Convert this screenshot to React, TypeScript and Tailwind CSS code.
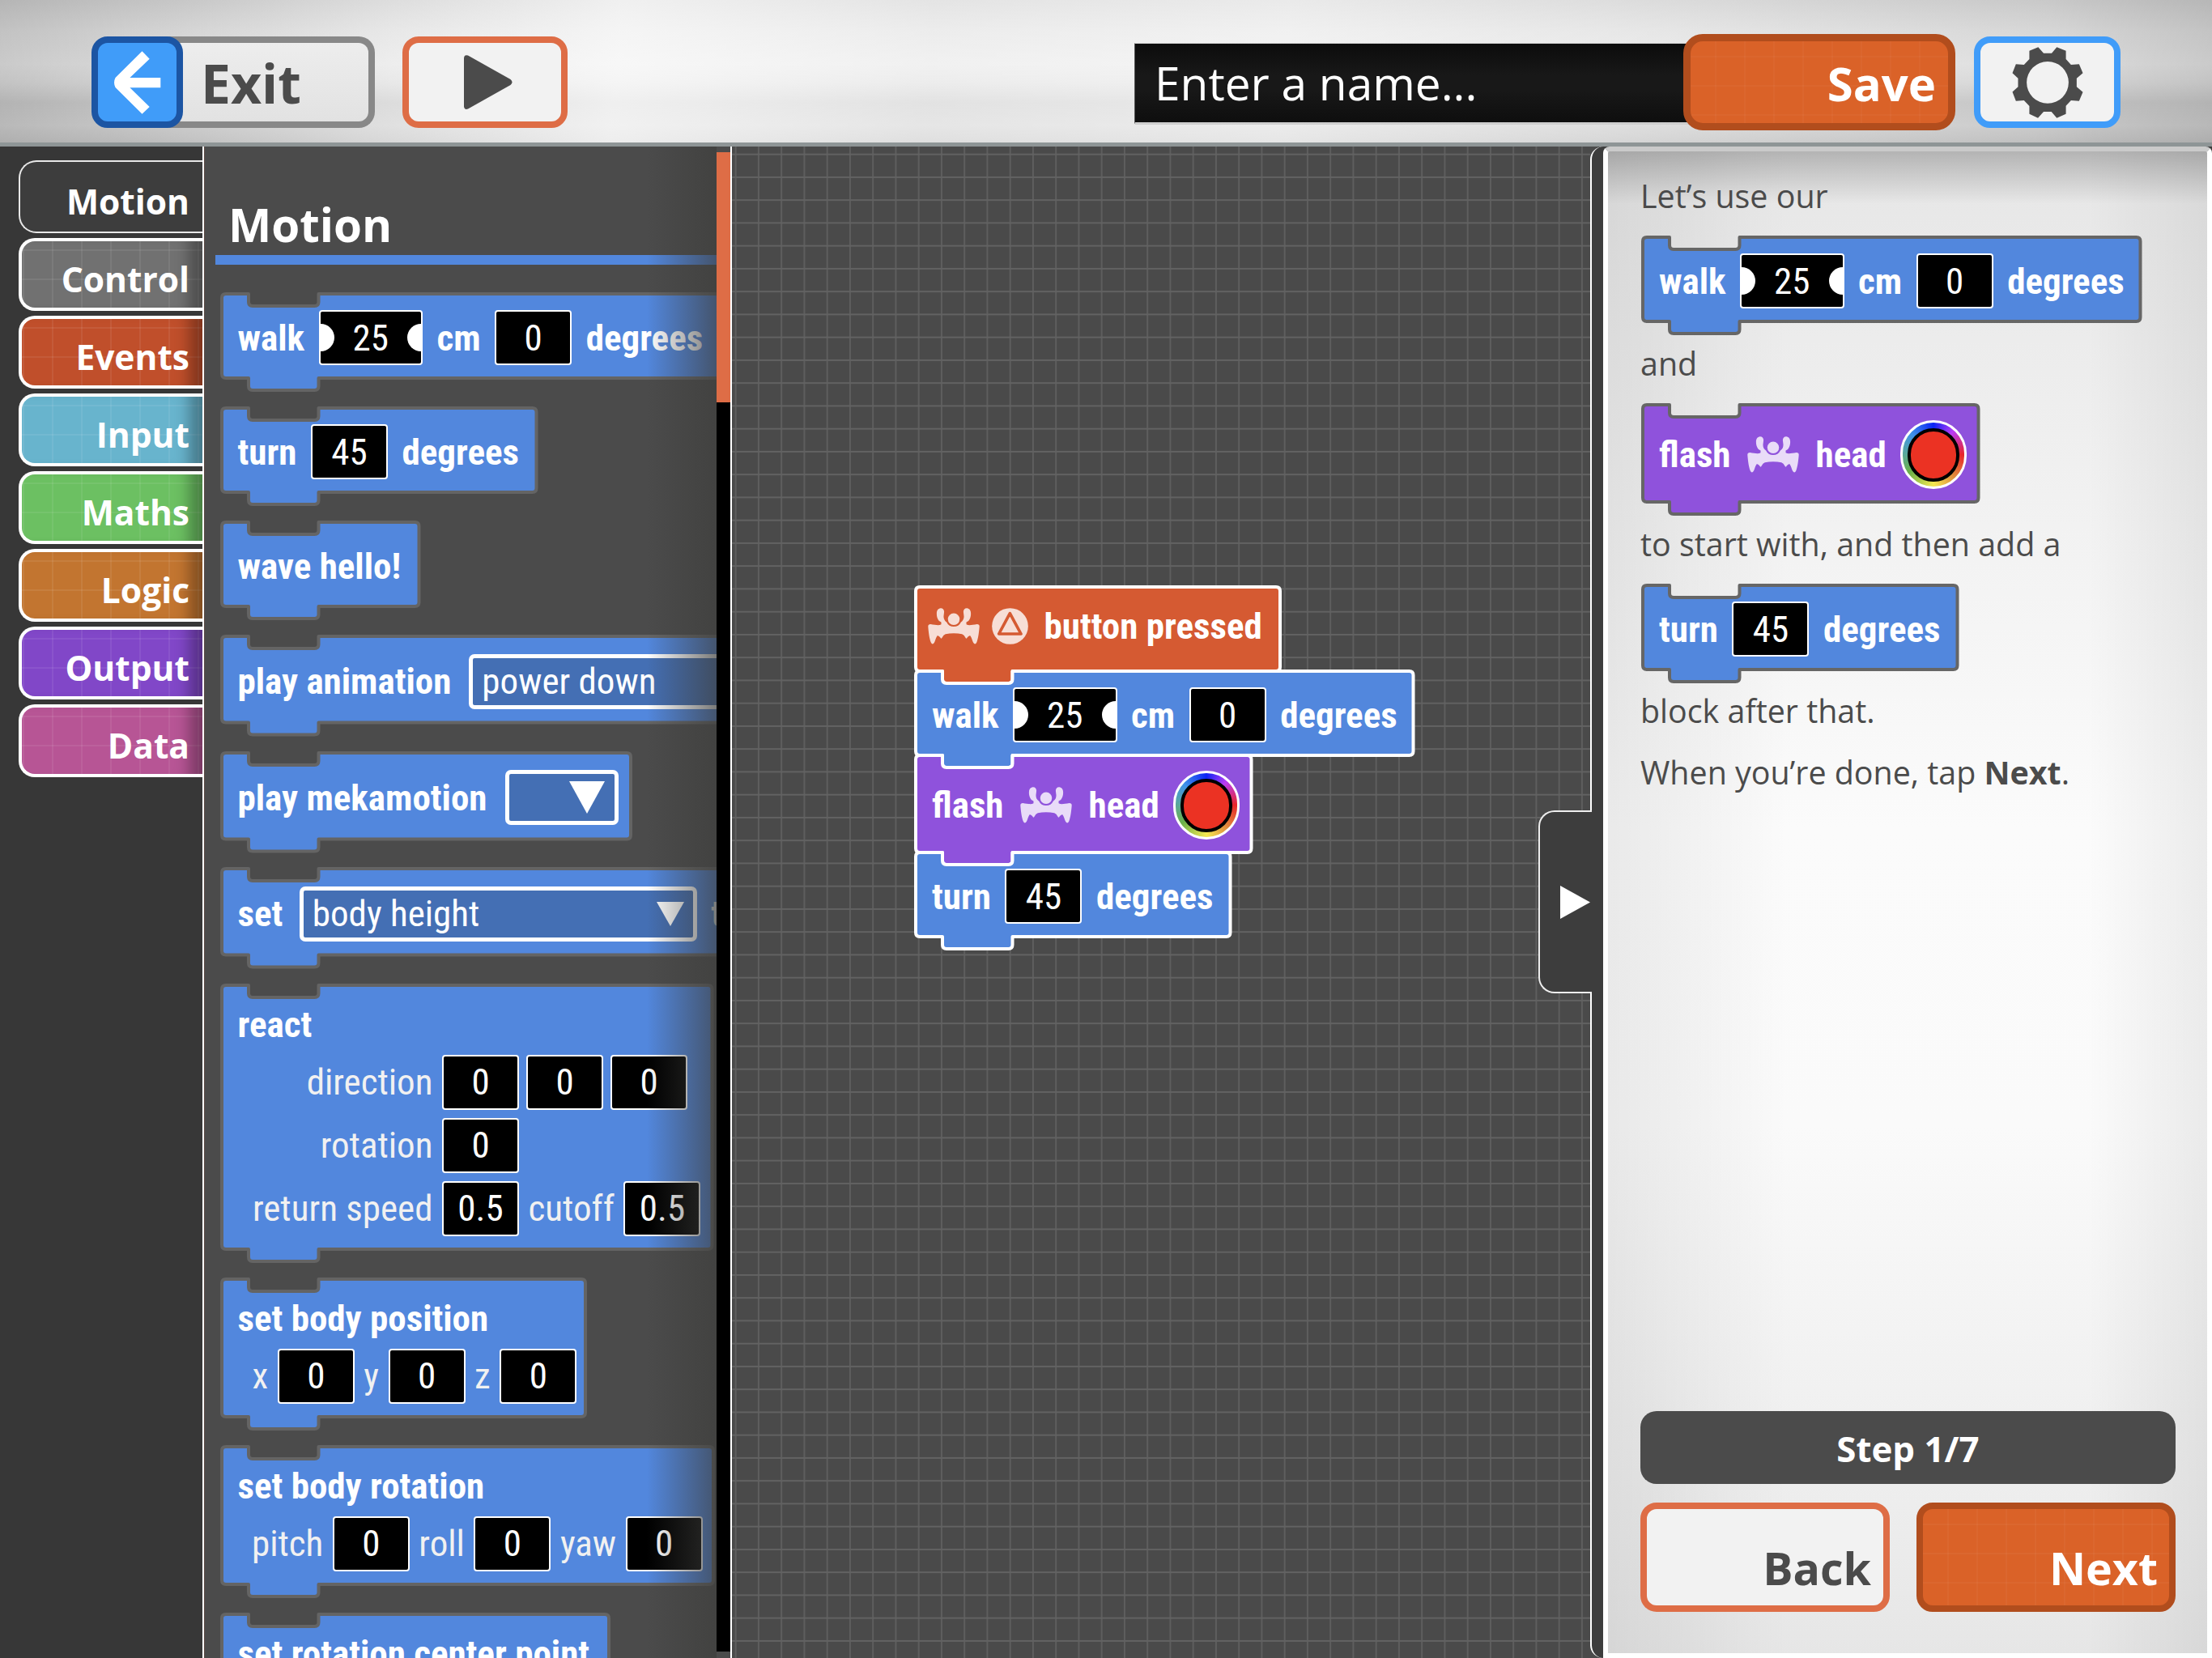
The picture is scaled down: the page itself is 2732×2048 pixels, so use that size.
import React from "react";
import clsx from "clsx";

const tabs = [
  { label: "Control", color: "bg-[#717171]" },
  { label: "Events", color: "bg-[#c04f2b]" },
  { label: "Input", color: "bg-[#68b4cd]" },
  { label: "Maths", color: "bg-[#6cc062]" },
  { label: "Logic", color: "bg-[#c27530]" },
  { label: "Output", color: "bg-[#8147c8]" },
  { label: "Data", color: "bg-[#b75595]" },
];

const buttonGrid =
  "bg-[linear-gradient(#ffffff08_2px,transparent_2px),linear-gradient(90deg,#ffffff08_2px,transparent_2px)] bg-size-[36px_36px] bg-position-[30px_18px]";

type BlockProps = {
  w: number;
  h: number;
  fill?: string;
  stroke?: string;
  hat?: boolean;
  className?: string;
  children: React.ReactNode;
};

function Block({
  w,
  h,
  fill = "#5287dd",
  stroke = "#646464",
  hat,
  className,
  children,
}: BlockProps) {
  const notch = hat ? "" : "H33 V10 q0 5 5 5 H114.5 q5 0 5 -5 V0";
  const d = `M0 5 q0 -5 5 -5 ${notch} H${w - 5} q5 0 5 5 V${h - 5} q0 5 -5 5 H119.5 V${h + 10} q0 5 -5 5 H38 q-5 0 -5 -5 V${h} H5 q-5 0 -5 -5 Z`;

  return (
    <div
      className="relative shrink-0 font-['Roboto_Condensed','Roboto',sans-serif] text-[45px] leading-none font-bold whitespace-nowrap text-white"
      style={{ width: w, height: h }}
    >
      <svg
        className="absolute inset-0 overflow-visible"
        width={w}
        height={h}
      >
        <path d={d} fill={fill} stroke={stroke} strokeWidth="4" strokeLinejoin="round" />
      </svg>
      <div className={clsx("relative", className)}>{children}</div>
    </div>
  );
}

function Num({ children }: { children: React.ReactNode }) {
  return (
    <span className="flex h-[68px] w-[95px] shrink-0 items-center justify-center rounded-[4px] border-[2.5px] border-white bg-black font-normal">
      {children}
    </span>
  );
}

// numeric field with grips on both sides
function Slider({ children }: { children: React.ReactNode }) {
  return (
    <span className="flex h-[68px] w-[128.5px] shrink-0 items-center justify-between overflow-hidden rounded-[4px] border-[2.5px] border-white bg-black font-normal">
      <i className="h-[34px] w-[17px] rounded-r-full bg-white" />
      {children}
      <i className="h-[34px] w-[17px] rounded-l-full bg-white" />
    </span>
  );
}

function Robot() {
  const body =
    "M118 85 C110 80 107 72 107 63 L109 47 C109 38 104 33 96 33 C86 34 81 42 81 53 C81 64 83 72 90 81 L98 85 V94 C90 99 76 96 58 93 Q48 93 49 103 C51 127 54 148 59 160 Q65 173 72 162 C76 154 78 142 84 135 Q91 137 94 142 Q98 151 102 142 Q106 133 114 130 Q128 127 145 127 Q162 127 176 130 Q184 133 188 142 Q192 151 196 142 Q199 137 206 135 C212 142 214 154 218 162 Q225 173 231 160 C236 148 239 127 241 103 Q242 93 232 93 C214 96 200 99 192 94 V85 L200 81 C207 72 209 64 209 53 C209 42 204 34 194 33 C186 33 181 38 181 47 L183 63 C183 72 180 80 172 85 A30 30 0 0 1 118 85 Z";
  return (
    <svg viewBox="48 33 194 135" className="h-[45px] w-[64px] shrink-0 fill-white/80">
      <path d={body} />
      <circle cx="145" cy="74" r="22" />
    </svg>
  );
}

function ColorWheel() {
  return (
    <span className="flex h-[85px] w-[82px] shrink-0 items-center justify-center rounded-full border-[3px] border-white bg-[conic-gradient(#0b24f5,#b93cf5_11%,#e8262a_25%,#e08b3c_38%,#f4e851_50%,#6bb04a_65%,#5aa89a_75%,#3f92e8_87%,#0b24f5)]">
      <span className="h-[66px] w-[64px] rounded-full border-4 border-black bg-[#eb3223]" />
    </span>
  );
}

function Label({ children, className }: { children: React.ReactNode; className?: string }) {
  return (
    <span className={clsx("mx-[2.5px] shrink-0 font-normal text-[#f1f1f1]", className)}>
      {children}
    </span>
  );
}

const row = "flex items-center gap-[17.5px] pl-[20px]";

function WalkBlock({ stroke }: { stroke?: string }) {
  return (
    <Block w={614.5} h={104} stroke={stroke} className={clsx(row, "pt-5")}>
      <span>walk</span>
      <Slider>25</Slider>
      <span>cm</span>
      <Num>0</Num>
      <span>degrees</span>
    </Block>
  );
}

function TurnBlock({ stroke }: { stroke?: string }) {
  return (
    <Block w={388.5} h={104} stroke={stroke} className={clsx(row, "pt-5")}>
      <span>turn</span>
      <Num>45</Num>
      <span>degrees</span>
    </Block>
  );
}

function FlashBlock({ stroke }: { stroke?: string }) {
  return (
    <Block w={414.5} h={120} fill="#8f52dc" stroke={stroke} className={clsx(row, "pt-[19px]")}>
      <span className="mr-[3px]">flash</span>
      <Robot />
      <span className="ml-[3px]">head</span>
      <ColorWheel />
    </Block>
  );
}

function Header() {
  return (
    <header className="relative flex h-[181px] shrink-0 items-center border-b-[5px] border-[#8e9596] bg-[linear-gradient(95deg,#00000020_0%,#00000010_6%,#ffffff50_18%,#ffffffb0_28%,#ffffff70_42%,#ffffff90_58%,#ffffff40_75%,#00000008_92%,#00000020_100%),linear-gradient(#cfcfcf_0%,#dedede_22%,#e6e6e6_45%,#dedede_58%,#cccccc_72%,#d2d2d2_88%,#c6c6c6_100%)] px-[113px] pt-[28px] pb-px">
      <div className="flex h-[113px]">
        <button className="relative z-10 flex w-[113px] items-center justify-center rounded-[20px] border-8 border-[#1c55a3] bg-[#409cf9]">
          <svg viewBox="141 63 58 78" className="h-[78px] w-[58px] fill-white">
            <path d="M175.5 63.3 L184.7 72.7 L160.4 96 H198.3 V108.3 H160.4 L184.7 132 L175.5 140.7 L142.5 108 Q139.5 102 142.5 96 Z" />
          </svg>
        </button>
        <button className="-ml-[30px] w-[267px] rounded-r-[20px] border-8 border-l-0 border-[#888] bg-[linear-gradient(#ededed,#e2e2e2)] pl-[52px] text-left text-[66px] leading-none font-bold text-[#4b4b4b]">
          Exit
        </button>
      </div>
      <button className="ml-[34px] flex h-[113px] w-[204px] items-center justify-center rounded-[20px] border-8 border-[#de6d46] bg-[#f2f2f2]">
        <svg viewBox="573 68 60 67" className="ml-[7px] h-[67px] w-[60px] fill-[#4b4b4b]">
          <path d="M573 71.5 Q573.5 67 578 68.5 L630.5 98 Q634.5 101.5 630.5 105 L578 134.5 Q573.5 136 573 131.5 Z" />
        </svg>
      </button>

      <div className="mt-[3px] mr-[-8px] ml-auto flex h-[101px] w-[686px] items-center border-t-[1.5px] border-b-[3px] border-l border-t-white/80 border-b-white/80 border-l-[#555] bg-[linear-gradient(#0c0c0c,#181818_40%,#181818_60%,#0e0e0e)] pt-px pl-[24px] text-[56.8px] leading-none text-white">
        Enter a name...
      </div>
      <button className="relative flex h-[119px] w-[336px] items-center justify-end rounded-[24px] border-[9px] border-[#b14d1d] bg-[#da6228] pr-[15px]">
        <span className={clsx("absolute inset-0 rounded-[15px]", buttonGrid)} />
        <span className="relative mt-[3px] text-[58px] leading-none font-bold text-white">Save</span>
      </button>
      <button className="ml-[23px] flex h-[113px] w-[181px] items-center justify-center rounded-[20px] border-8 border-[#409cf9] bg-[#f2f2f2]">
        <svg viewBox="255 113 264 265" className="h-[88px] w-[88px] fill-[#4b4b4b]">
          <path
            fillRule="evenodd"
            d="M319 127 L352 114 L372 136 H402 L421 114 L455 127 V158 L474 179 L504 177 L518 210 L495 230 V261 L518 281 L504 314 L474 312 L455 332 V362 L421 377 L401 354 H372 L351 377 L319 362 V333 L299 312 L269 314 L256 280 L277 261 V230 L256 210 L269 177 L299 179 L319 158 Z M309 245 a78 78 0 1 0 156 0 a78 78 0 1 0 -156 0 Z"
          />
        </svg>
      </button>
    </header>
  );
}

function Sidebar() {
  return (
    <nav className="flex w-[250px] shrink-0 flex-col gap-[6px] bg-[#373737] pt-[17px] pl-[23px] text-right text-[42.5px] leading-[58px] font-bold text-white">
      <div className="h-[90px] rounded-l-[22px] border-2 border-r-0 border-[#e8e8e8] bg-[#3d3d3d] pt-[20px] pr-[16px]">
        Motion
      </div>
      {tabs.map((t) => (
        <div
          key={t.label}
          className={clsx(
            "h-[90px] rounded-l-[20px] border-4 border-r-0 border-white bg-[linear-gradient(#ffffff12_2px,transparent_2px),linear-gradient(90deg,#ffffff12_2px,transparent_2px)] bg-size-[36px_36px] bg-position-[1px_10px] pt-[18px] pr-[16px] shadow-[inset_-30px_0_18px_-14px_rgba(0,0,0,0.32)]",
            t.color
          )}
        >
          {t.label}
        </div>
      ))}
    </nav>
  );
}

function Palette() {
  return (
    <div className="flex shrink-0 border-l-2 border-white">
      <div className="relative w-[633px] overflow-hidden border-l border-[#5c4a45] bg-[#4b4b4b]">
        <h2 className="h-[134px] pt-[67px] pl-[29px] text-[56.5px] leading-[60px] font-bold text-white">
          Motion
        </h2>
        <div className="ml-[13px] h-3 bg-[#5287dd]" />
        <div className="flex flex-col gap-[37px] pt-9 pl-[20.5px]">
          <WalkBlock />
          <TurnBlock />
          <Block w={243.5} h={104} className={clsx(row, "h-[108px]")}>
            <span>wave hello!</span>
          </Block>
          <Block w={800} h={106.5} className={clsx(row, "pt-[21.5px]")}>
            <span>play animation</span>
            <span className="ml-[4.5px] flex h-[68px] w-[500px] items-center rounded-[7px] border-[5px] border-white bg-[#446fb4] pl-[11px] font-normal">
              power down
            </span>
          </Block>
          <Block w={505} h={106.5} className={clsx(row, "pt-[21.5px]")}>
            <span>play mekamotion</span>
            <span className="ml-[5px] flex h-[68px] w-[140px] items-center justify-end rounded-[7px] border-[5px] border-white bg-[#446fb4] pr-3">
              <svg viewBox="0 0 44 40" className="h-10 w-11 fill-white">
                <path d="M0 0 H44 L22 40 Z" />
              </svg>
            </span>
          </Block>
          <Block w={800} h={106.5} className={clsx(row, "pt-[21.5px]")}>
            <span>set</span>
            <span className="ml-[3px] flex h-[68px] w-[491px] shrink-0 items-center justify-between rounded-[7px] border-[5px] border-white bg-[#446fb4] pr-[11px] pl-[11px] font-normal">
              body height
              <svg viewBox="0 0 34 30" className="h-[30px] w-[34px] fill-white">
                <path d="M0 0 H34 L17 30 Z" />
              </svg>
            </span>
            <span>to</span>
          </Block>
          <Block w={605.5} h={326} className="pt-[26px] pl-[20px]">
            <div className="h-[60px]">react</div>
            <div className="flex flex-col gap-[10px] pl-[15.5px]">
              <div className="flex items-center gap-[9px]">
                <Label className="w-[223px] text-right">direction</Label>
                <Num>0</Num>
                <Num>0</Num>
                <Num>0</Num>
              </div>
              <div className="flex items-center gap-[9px]">
                <Label className="w-[223px] text-right">rotation</Label>
                <Num>0</Num>
              </div>
              <div className="flex items-center gap-[9px]">
                <Label className="w-[223px] text-right">return speed</Label>
                <Num>0.5</Num>
                <Label>cutoff</Label>
                <Num>0.5</Num>
              </div>
            </div>
          </Block>
          <Block w={449} h={170} className="pt-[26px] pl-[20px]">
            <div className="h-[60px]">set body position</div>
            <div className="flex items-center gap-[9px] pl-[15.5px]">
              <Label>x</Label>
              <Num>0</Num>
              <Label>y</Label>
              <Num>0</Num>
              <Label>z</Label>
              <Num>0</Num>
            </div>
          </Block>
          <Block w={607} h={170} className="pt-[26px] pl-[20px]">
            <div className="h-[60px]">set body rotation</div>
            <div className="flex items-center gap-[9px] pl-[15px]">
              <Label>pitch</Label>
              <Num>0</Num>
              <Label>roll</Label>
              <Num>0</Num>
              <Label>yaw</Label>
              <Num>0</Num>
            </div>
          </Block>
          <Block w={478} h={170} className="pt-[26px] pl-[20px]">
            <div>set rotation center point</div>
          </Block>
        </div>
        <div className="absolute inset-y-0 right-0 w-[86px] bg-linear-to-r from-transparent to-[#3e3e3cb0]" />
      </div>
      <div className="mb-2 w-[17px] bg-black">
        <div className="h-[7px] bg-[#4b4b4b]" />
        <div className="h-[309px] bg-[#de6d46]" />
      </div>
      <div className="w-0.5 bg-white" />
    </div>
  );
}

function Workspace() {
  return (
    <div className="relative flex-1 bg-[#4a4a4a] bg-[linear-gradient(#626262_2px,transparent_2px),linear-gradient(90deg,#5e5e5e_2px,transparent_2px)] bg-size-[28.26px_28.26px] bg-position-[3.7px_8.7px]">
      <div className="absolute top-[544px] left-[227px] flex flex-col">
        <Block w={450} h={104} hat fill="#d55a32" stroke="#fff" className="flex items-center pt-[26px] pl-[15px]">
          <Robot />
          <svg viewBox="285 33 135 135" className="ml-[15px] size-[45px] shrink-0">
            <circle cx="352.5" cy="100.5" r="67" className="fill-white/80" />
            <path
              d="M311 129 L352 53 L393 129 Z"
              fill="none"
              stroke="#d55a32"
              strokeWidth="11"
              strokeLinejoin="round"
            />
          </svg>
          <span className="ml-[19.5px]">button pressed</span>
        </Block>
        <WalkBlock stroke="#fff" />
        <FlashBlock stroke="#fff" />
        <TurnBlock stroke="#fff" />
      </div>
    </div>
  );
}

function Tutorial() {
  return (
    <aside className="relative flex w-[768px] shrink-0 rounded-l-[16px] border-l-2 border-white bg-[#3d3d3d] pl-[14px]">
      <div className="absolute top-[820px] -left-[66px] flex h-[226px] w-[66px] items-center justify-end rounded-l-[20px] border-2 border-r-0 border-[#eee] bg-[#3d3d3d] pr-[2px]">
        <svg viewBox="0 0 37 41" className="h-[41px] w-[37px] fill-white">
          <path d="M0 0 L37 20.5 L0 41 Z" />
        </svg>
      </div>
      <div className="flex flex-1 flex-col rounded-t-[8px] border-6 border-white border-t-[#cacaca] bg-[linear-gradient(#00000038,transparent_65px),linear-gradient(90deg,#00000012,transparent_30%,transparent_80%,#00000010),linear-gradient(#e6e6e6,#f2f2f2_25%,#fbfbfb_45%,#fafafa_65%,#ececec_92%,#e6e6e6)] pt-[28px] pr-[39px] pb-[51px] pl-[40px] text-[39.4px] leading-[54px] text-[#4b4b4b]">
        <p>Let’s use our</p>
        <div className="mt-6 mb-[25px] ml-[3px]">
          <WalkBlock stroke="#666" />
        </div>
        <p>and</p>
        <div className="mt-6 mb-[25px] ml-[3px]">
          <FlashBlock stroke="#666" />
        </div>
        <p>to start with, and then add a</p>
        <div className="mt-6 mb-6 ml-[3px]">
          <TurnBlock stroke="#666" />
        </div>
        <p>block after that.</p>
        <p className="mt-[22px]">
          When you’re done, tap <b className="font-bold">Next</b>.
        </p>

        <div className="mt-auto flex h-[90px] items-center justify-center rounded-[20px] bg-[#4b4b4b] pt-0.5 text-[43.8px] font-bold text-white">
          Step 1/7
        </div>
        <div className="mt-[23px] flex h-[135px] justify-between text-[55.5px] leading-[56px] font-bold">
          <button className="flex w-[308px] items-end justify-end rounded-[20px] border-8 border-[#de6d46] bg-[#f2f2f2] pr-[15px] pb-[18px]">
            Back
          </button>
          <button
            className={clsx(
              "flex w-[320px] items-end justify-end rounded-[20px] border-8 border-[#b14d1d] bg-[#da6228] pr-[14px] pb-[18px] text-white",
              buttonGrid
            )}
          >
            Next
          </button>
        </div>
      </div>
    </aside>
  );
}

export default function App() {
  return (
    <div className="flex h-[2048px] w-[2732px] flex-col overflow-hidden bg-[#4b4b4b] font-['Open_Sans','Noto_Sans',sans-serif]">
      <Header />
      <main className="flex h-[1867px]">
        <Sidebar />
        <Palette />
        <Workspace />
        <Tutorial />
      </main>
    </div>
  );
}
